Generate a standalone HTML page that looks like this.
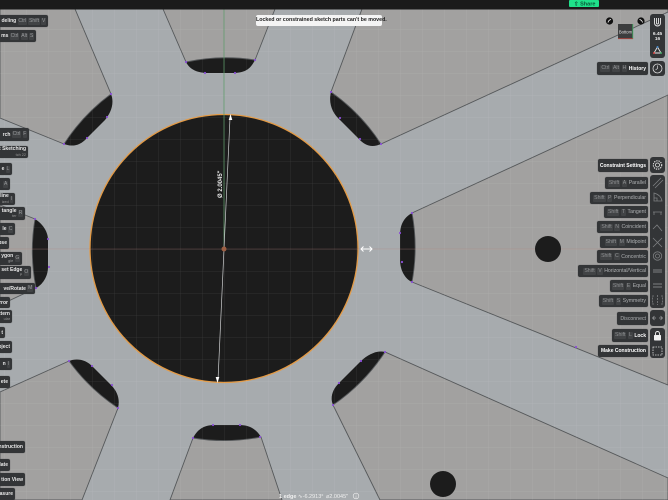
<!DOCTYPE html>
<html><head><meta charset="utf-8">
<style>
html,body{margin:0;padding:0;background:#a7abae}
#s{position:relative;width:668px;height:500px;overflow:hidden;font-family:"Liberation Sans",sans-serif;background:#a7abae}
svg{position:absolute;left:0;top:0}
.p{position:absolute;background:#333537;border-radius:2px;box-sizing:border-box;display:flex;align-items:center;justify-content:flex-end;white-space:nowrap;overflow:hidden;font-size:5.2px;color:#aeb0b2;padding:0 2px;box-shadow:0 0 1px rgba(0,0,0,.4)}
.l{left:0;border-radius:0 2px 2px 0;font-weight:bold;font-size:5px;color:#e8e8e8}
.l i{font-style:normal;font-weight:normal;color:#9a9c9e;background:#414345;border-radius:1px;padding:0 .7px;margin-left:1.500px;line-height:7px;flex:none}
.l small{display:block;font-size:3.800px;font-weight:normal;color:#999;line-height:4.500px}
.l div{text-align:right;line-height:5.500px;flex:none}
.r i{font-style:normal;color:#8f9193;background:#414345;border-radius:1px;padding:0 1px;margin-right:1.500px;line-height:7px;flex:none}
.r b{color:#fff;font-size:5px}
.b{position:absolute;left:650px;width:15px;background:#333537;border-radius:3px}
</style></head><body><div id="s">
<svg width="668" height="500" viewBox="0 0 668 500">
<defs>
<pattern id="g" x="4" y="7" width="22" height="22" patternUnits="userSpaceOnUse"><path d="M0 0H22M0 0V22" stroke="#fff" stroke-opacity=".12" stroke-width=".7" fill="none"/></pattern>
</defs>
<g fill="#1c1c1c">
<path d="M111 94C115 104 110 114 105 120L87 138C80 146 72 147 64 144L60 100Z"/>
<path d="M186 62C190 70 198 73 208 73H232C244 73 250 70 255 60L220 30Z"/>
<path d="M331 92C328 104 333 114 340 120L358 138C365 146 372 148 381 144L390 100Z"/>
<path d="M412 213C403 218 400 226 400 235V260C400 270 405 279 412 282L450 248Z"/>
<path d="M35 219C43 224 48 232 48 240V267C48 277 42 285 36 288L10 250Z"/>
<path d="M69 361C76 358 86 359 93 367L111 385C118 392 120 400 118 408L60 420Z"/>
<path d="M385 352C378 350 368 354 361 361L339 383C332 390 330 398 333 405L395 420Z"/>
<path d="M193 438C198 428 206 425 214 425H240C250 425 257 430 261 437L226 470Z"/>
</g>
<g fill="#a2a1a0" stroke="#55585a" stroke-width=".9">
<path d="M0 9H75L111 94A191 191 0 0 0 64 144L0 118Z"/>
<path d="M163 9H275L255 60A191 191 0 0 0 186 62Z"/>
<path d="M362 9H668V12L381 144A191 191 0 0 0 331 92Z"/>
<path d="M668 95L412 213A191 191 0 0 1 412 282L668 385Z"/>
<path d="M668 478L385 352A191 191 0 0 1 333 405L380 500H668Z"/>
<path d="M193 438A191 191 0 0 0 261 437L282 500H170Z"/>
<path d="M69 361A191 191 0 0 0 118 408L82 500H0V392Z"/>
<path d="M0 205L35 219A191 191 0 0 0 36 288L0 305Z"/>
</g>
<circle cx="224" cy="248.500" r="134" fill="#1c1c1c" stroke="#e39a45" stroke-width="1.300"/>
<rect width="668" height="500" fill="url(#g)"/>
<path d="M224 9V249" stroke="#5c9a68" stroke-width="1" opacity=".75"/>
<path d="M0 249H668" stroke="#b07a70" stroke-width=".6" opacity=".55"/>
<path d="M230 118L224 249L218 380" stroke="#cfd1d2" stroke-width=".7" fill="none"/>
<path d="M230.500 114L232.300 120H228.700Z" fill="#fff"/>
<path d="M217.500 383L215.700 377H219.300Z" fill="#fff"/>
<circle cx="224" cy="249" r="2.500" fill="#9c5f43"/>
<text transform="translate(222 198) rotate(-90)" font-family="Liberation Sans" font-size="6" font-weight="bold" fill="#e6e6e6">Ø 2.0045"</text>
<g fill="#8a4fd6">
<circle cx="111" cy="94" r="1.100"/><circle cx="107" cy="117" r="1.100"/><circle cx="87" cy="138" r="1.100"/><circle cx="64" cy="144" r="1.100"/>
<circle cx="186" cy="62" r="1.100"/><circle cx="255" cy="60" r="1.100"/><circle cx="235" cy="73" r="1.100"/><circle cx="205" cy="73" r="1.100"/>
<circle cx="331" cy="92" r="1.100"/><circle cx="340" cy="118" r="1.100"/><circle cx="381" cy="144" r="1.100"/><circle cx="360" cy="139" r="1.100"/>
<circle cx="412" cy="213" r="1.100"/><circle cx="400" cy="233" r="1.100"/><circle cx="402" cy="262" r="1.100"/><circle cx="412" cy="282" r="1.100"/>
<circle cx="35" cy="219" r="1.100"/><circle cx="48" cy="239" r="1.100"/><circle cx="49" cy="267" r="1.100"/><circle cx="36" cy="288" r="1.100"/>
<circle cx="69" cy="361" r="1.100"/><circle cx="92" cy="366" r="1.100"/><circle cx="112" cy="385" r="1.100"/><circle cx="118" cy="408" r="1.100"/>
<circle cx="193" cy="438" r="1.100"/><circle cx="213" cy="425" r="1.100"/><circle cx="240" cy="425" r="1.100"/><circle cx="260" cy="437" r="1.100"/>
<circle cx="333" cy="405" r="1.100"/><circle cx="339" cy="383" r="1.100"/><circle cx="361" cy="361" r="1.100"/><circle cx="385" cy="352" r="1.100"/><circle cx="576" cy="347" r="1.100"/>
</g>
<circle cx="548" cy="249" r="13" fill="#1c1c1c"/>
<circle cx="443" cy="484" r="13" fill="#1c1c1c"/>
<path d="M361 249H372M363.500 246.500L361 249L363.500 251.500M369.500 246.500L372 249L369.500 251.500" stroke="#fff" stroke-width="1" fill="none"/>
<rect width="668" height="9.500" fill="#1b1b1b"/>
<rect x="569" y="0" width="30" height="7" rx="1" fill="#1fe08a"/>
<text x="574" y="5.500" font-family="Liberation Sans" font-size="5.500" font-weight="bold" fill="#0b5a3a">⇧ Share</text>
<circle cx="609.500" cy="21" r="3.600" fill="#111"/><path d="M608 22.500Q608.500 20 611 19.500" stroke="#fff" stroke-width=".8" fill="none"/>
<circle cx="641" cy="21" r="3.600" fill="#111"/><path d="M639.500 19.500Q642 20 642.500 22.500" stroke="#fff" stroke-width=".8" fill="none"/>
<rect x="618" y="24" width="15" height="15" fill="#3c3d3e"/>
<path d="M632.800 24V39" stroke="#3fae62" stroke-width=".8"/><path d="M618 38.700H633" stroke="#b9483f" stroke-width=".8"/>
<text x="625.500" y="33.500" text-anchor="middle" font-family="Liberation Sans" font-size="4.200" fill="#ddd">Bottom</text>
<text x="279" y="498" font-family="Liberation Sans" font-size="5.500" font-weight="bold" fill="#f0f0f0">1 edge</text>
<text x="298" y="498" font-family="Liberation Sans" font-size="5.500" fill="#f0f0f0">∿-6.2913°</text>
<text x="326" y="498" font-family="Liberation Sans" font-size="5.500" fill="#f0f0f0">⌀2.0045"</text>
<circle cx="356" cy="496" r="2.800" fill="none" stroke="#f0f0f0" stroke-width=".6"/>
<text x="356" y="498" text-anchor="middle" font-family="Liberation Sans" font-size="4.500" fill="#f0f0f0">i</text>
</svg>

<div style="position:absolute;left:256px;top:15px;width:126px;height:11px;background:#f4f4f4;border-radius:2px;font-size:5.300px;font-weight:bold;color:#222;line-height:11px;text-align:center;white-space:nowrap">Locked or constrained sketch parts can't be moved.</div>

<div class="p l" style="top:15px;width:48px;height:12px">deling<i>Ctrl</i><i>Shift</i><i>V</i></div>
<div class="p l" style="top:30px;width:36px;height:12px">ms<i>Ctrl</i><i>Alt</i><i>S</i></div>
<div class="p l" style="top:128px;width:29px;height:13px">rch<i>Ctrl</i><i>F</i></div>
<div class="p l" style="top:146px;width:28px;height:12px"><div>t Sketching<small>tch 22</small></div></div>
<div class="p l" style="top:163px;width:12px;height:12px">e<i>L</i></div>
<div class="p l" style="top:178px;width:10px;height:12px"><i>A</i></div>
<div class="p l" style="top:193px;width:15px;height:12px"><div>line<small>ized</small></div><i>I</i></div>
<div class="p l" style="top:207px;width:25px;height:13px"><div>tangle<small>ter</small></div><i>R</i></div>
<div class="p l" style="top:223px;width:15px;height:12px">le<i>C</i></div>
<div class="p l" style="top:237px;width:9px;height:12px">pse</div>
<div class="p l" style="top:252px;width:22px;height:13px"><div>ygon<small>gle</small></div><i>G</i></div>
<div class="p l" style="top:266px;width:31px;height:13px"><div>set Edge<small>P</small></div><i>O</i></div>
<div class="p l" style="top:283px;width:35px;height:11px">ve/Rotate<i>M</i></div>
<div class="p l" style="top:297px;width:10px;height:11px">rror</div>
<div class="p l" style="top:310px;width:12px;height:13px"><div>ttern<small>ular</small></div></div>
<div class="p l" style="top:327px;width:5px;height:11px">t</div>
<div class="p l" style="top:341px;width:12px;height:12px">oject</div>
<div class="p l" style="top:358px;width:12px;height:12px">n<i>I</i></div>
<div class="p l" style="top:376px;width:10px;height:12px">ete</div>
<div class="p l" style="top:441px;width:25px;height:12px">nstruction</div>
<div class="p l" style="top:459px;width:10px;height:12px">late</div>
<div class="p l" style="top:473px;width:25px;height:13px">tion View</div>
<div class="p l" style="top:488px;width:15px;height:12px">asure</div>

<div class="p r" style="left:597px;top:62px;width:51px;height:13px"><i>Ctrl</i><i>Alt</i><i>H</i><b>History</b></div>
<div class="p r" style="left:598px;top:159px;width:50px;height:13px"><b>Constraint Settings</b></div>
<div class="p r" style="left:605px;top:177px;width:43px;height:12px"><i>Shift</i><i>A</i>Parallel</div>
<div class="p r" style="left:590px;top:192px;width:58px;height:12px"><i>Shift</i><i>P</i>Perpendicular</div>
<div class="p r" style="left:604px;top:206px;width:44px;height:12px"><i>Shift</i><i>T</i>Tangent</div>
<div class="p r" style="left:597px;top:221px;width:51px;height:12px"><i>Shift</i><i>N</i>Coincident</div>
<div class="p r" style="left:600px;top:236px;width:48px;height:12px"><i>Shift</i><i>M</i>Midpoint</div>
<div class="p r" style="left:597px;top:250px;width:51px;height:13px"><i>Shift</i><i>C</i>Concentric</div>
<div class="p r" style="left:578px;top:265px;width:70px;height:12px"><i>Shift</i><i>V</i>Horizontal/Vertical</div>
<div class="p r" style="left:610px;top:280px;width:38px;height:12px"><i>Shift</i><i>E</i>Equal</div>
<div class="p r" style="left:599px;top:295px;width:49px;height:12px"><i>Shift</i><i>S</i>Symmetry</div>
<div class="p r" style="left:617px;top:312px;width:31px;height:13px">Disconnect</div>
<div class="p r" style="left:612px;top:329px;width:36px;height:13px"><i>Shift</i><i>L</i><b>Lock</b></div>
<div class="p r" style="left:598px;top:345px;width:50px;height:12px"><b>Make Construction</b></div>

<div class="b" style="top:14px;height:44px"></div>
<div class="b" style="top:61px;height:15px"></div>
<div class="b" style="top:157px;height:16px"></div>
<div class="b" style="top:175px;height:133px"></div>
<div class="b" style="top:310px;height:16px"></div>
<div class="b" style="top:328px;height:30px"></div>

<svg width="668" height="500" viewBox="0 0 668 500" style="pointer-events:none">
<path d="M654.500 18V23A3 3 0 0 0 660.500 23V18M656.500 18V23A1 1 0 0 0 658.500 23V18" stroke="#e8e8e8" stroke-width=".9" fill="none"/>
<text x="657.500" y="35" text-anchor="middle" font-family="Liberation Sans" font-size="4.800" font-weight="bold" fill="#e8e8e8">6.45</text>
<text x="657.500" y="40" text-anchor="middle" font-family="Liberation Sans" font-size="4.800" font-weight="bold" fill="#e8e8e8">16</text>
<path d="M657.500 47L654 53H661Z" stroke="#e8e8e8" stroke-width=".9" fill="none"/><circle cx="654" cy="53" r="1" fill="#d44"/><circle cx="661" cy="53" r="1" fill="#4a6"/><circle cx="657.500" cy="47" r="1" fill="#48c"/>
<circle cx="657.500" cy="68.500" r="4.500" stroke="#ddd" stroke-width=".8" fill="none"/><path d="M657.500 65.500V68.500L655.500 70" stroke="#ddd" stroke-width=".7" fill="none"/>
<circle cx="657.500" cy="165" r="2" stroke="#e8e8e8" stroke-width=".8" fill="none"/><circle cx="657.500" cy="165" r="4.200" stroke="#e8e8e8" stroke-width="1.100" stroke-dasharray="1.300 1" fill="none"/>
<g stroke="#7d7f81" stroke-width=".8" fill="none">
<path d="M653 186L661 178M655 188L663 180"/>
<path d="M654 193V201H662Q661 195 654 193ZM654 198H657V201"/>
<path d="M653 212H662M654 212V215M661 212V215"/>
<path d="M653 229L657 225L662 231"/>
<path d="M653 238L662 247M662 238L653 247"/>
<circle cx="657.500" cy="256" r="4.200"/><circle cx="657.500" cy="256" r="2"/>
<path d="M653 270H662M653 272H662" stroke-width="1"/>
<path d="M653 284H662M653 287H662" stroke-width="1"/>
<path d="M654 296H652.500V304H654M661 296H662.500V304H661M657.500 295V305" stroke-dasharray="2 1"/>
</g>
<path d="M653 318H656M659 318H662M654.500 316L652.500 318L654.500 320M660.500 316L662.500 318L660.500 320" stroke="#9a9c9e" stroke-width=".7" fill="none"/>
<rect x="654" y="335" width="7" height="5.500" rx=".7" fill="#f0f0f0"/><path d="M655.500 335V333.500A2 2 0 0 1 659.500 333.500V335" stroke="#f0f0f0" stroke-width=".9" fill="none"/>
<rect x="653" y="347" width="9" height="8" stroke="#d8d8d8" stroke-width=".8" stroke-dasharray="1.500 1" fill="none"/>
</svg>
</div></body></html>
